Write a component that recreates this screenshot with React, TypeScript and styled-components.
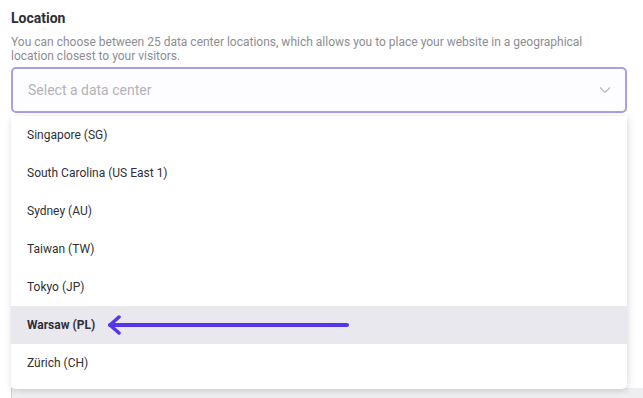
import React from "react";
import styled, { createGlobalStyle } from "styled-components";

const GlobalStyle = createGlobalStyle`
  html, body {
    margin: 0;
    padding: 0;
    background: #ffffff;
    font-family: Roboto, "Liberation Sans", Arial, sans-serif;
    -webkit-font-smoothing: antialiased;
  }
`;

const Page = styled.div`
  width: 643px;
  height: 398px;
  overflow: hidden;
  position: relative;
  background: #ffffff;
`;

const Field = styled.section`
  padding: 9px 16px 0 11px;
  display: flex;
  flex-direction: column;
`;

const Label = styled.h3`
  margin: 0;
  font-size: 14px;
  line-height: 18px;
  font-weight: 700;
  color: #2e2e33;
`;

const Help = styled.p`
  margin: 8px 0 0;
  font-size: 12px;
  line-height: 14px;
  color: #8d8d94;
  max-width: 600px;
`;

const SelectBox = styled.div`
  margin-top: 4px;
  height: 46px;
  box-sizing: border-box;
  border: 2px solid #a99fe3;
  border-radius: 5px;
  display: flex;
  align-items: center;
  justify-content: space-between;
  padding: 0 14px 0 15px;
  background: #fdfdff;
`;

const Placeholder = styled.span`
  font-size: 14px;
  color: #b3b3b8;
`;

const Menu = styled.ul`
  list-style: none;
  margin: 3px 0 0;
  padding: 0 0 7px;
  background: #ffffff;
  border-radius: 0 0 5px 5px;
  box-shadow: 0 2px 6px rgba(0, 0, 0, 0.12), 4px 0 10px rgba(0, 0, 0, 0.04);
  position: relative;
  z-index: 2;
`;

const Option = styled.li<{ $active?: boolean }>`
  height: 38px;
  display: flex;
  align-items: center;
  gap: 12px;
  padding: 0 16px;
  font-size: 12px;
  color: #2f2f35;
  font-weight: ${({ $active }) => ($active ? 700 : 400)};
  background: ${({ $active }) => ($active ? "#e9e8ef" : "transparent")};
`;

const Backdrop = styled.div`
  position: absolute;
  left: 0;
  right: 0;
  bottom: 0;
  height: 10px;
  background: #eeeef0;
  border-left: 1px solid #d0d0d4;
  margin-left: 11px;
`;

const Chevron = () => (
  <svg width="12" height="8" viewBox="0 0 12 8" fill="none">
    <path d="M1 1.5L6 6.5L11 1.5" stroke="#b9b9be" strokeWidth="1.2" />
  </svg>
);

const Arrow = () => (
  <svg width="244" height="20" viewBox="0 0 244 20" fill="none">
    <path d="M3 10H240" stroke="#5735ec" strokeWidth="4" strokeLinecap="round" />
    <path d="M12 2L3 10L12 18" stroke="#5735ec" strokeWidth="3.5" strokeLinecap="round" strokeLinejoin="round" />
  </svg>
);

const locations = [
  "Singapore (SG)",
  "South Carolina (US East 1)",
  "Sydney (AU)",
  "Taiwan (TW)",
  "Tokyo (JP)",
  "Warsaw (PL)",
  "Zürich (CH)",
];

export default function App() {
  return (
    <Page>
      <GlobalStyle />
      <Backdrop />
      <Field>
        <Label>Location</Label>
        <Help>
          You can choose between 25 data center locations, which allows you to place your website in a geographical
          location closest to your visitors.
        </Help>
        <SelectBox>
          <Placeholder>Select a data center</Placeholder>
          <Chevron />
        </SelectBox>
        <Menu>
          {locations.map((loc) => (
            <Option key={loc} $active={loc === "Warsaw (PL)"}>
              {loc}
              {loc === "Warsaw (PL)" && <Arrow />}
            </Option>
          ))}
        </Menu>
      </Field>
    </Page>
  );
}
